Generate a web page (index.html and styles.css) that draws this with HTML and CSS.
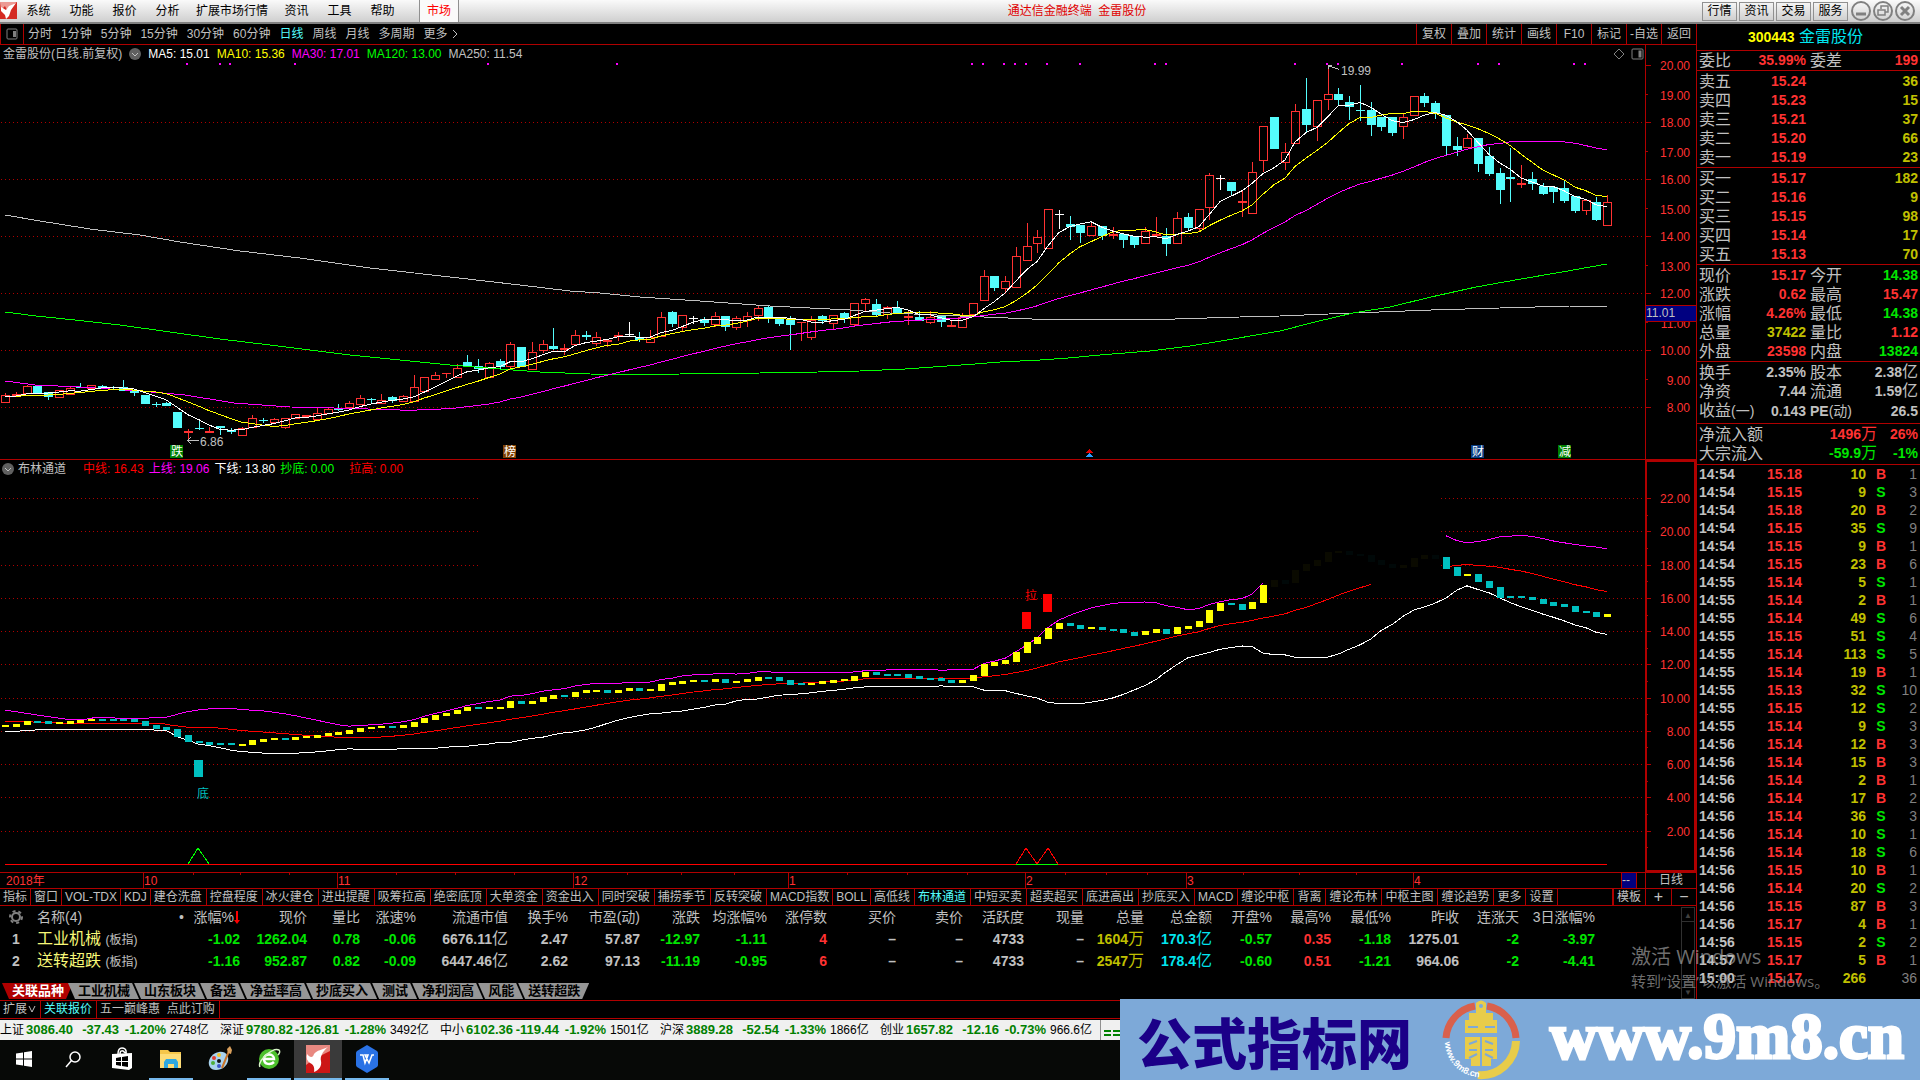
FILE: index.html
```html
<!DOCTYPE html>
<html lang="zh-CN">
<head>
    <meta charset="UTF-8">
    <title>通达信金融终端 金雷股份</title>
    <link rel="stylesheet" href="styles.css">
</head>
<body>
    <header class="titlebar">
        <svg class="app-logo" width="17" height="17" viewBox="0 0 17 17">
            <rect width="17" height="17" fill="#d42a22"/>
            <path d="M0 0h17L9 5 7 8 5 4 1 8z" fill="#ec9a94"/>
            <path d="M1 5l5 3 3-4 7-3-5 7-2 6-3 3-1-4-4-4z" fill="#fff"/>
        </svg>
        <nav class="menu">
            <a href="#">系统</a>
            <a href="#">功能</a>
            <a href="#">报价</a>
            <a href="#">分析</a>
            <a href="#">扩展市场行情</a>
            <a href="#">资讯</a>
            <a href="#">工具</a>
            <a href="#">帮助</a>
            <a href="#" class="market">市场</a>
        </nav>
        <div class="app-title">通达信金融终端&nbsp; 金雷股份</div>
        <div class="title-buttons">
            <button>行情</button>
            <button>资讯</button>
            <button>交易</button>
            <button>服务</button>
        </div>
        <div class="window-buttons">
            <button aria-label="最小化"><svg width="20" height="20" viewBox="0 0 20 20"><circle cx="10" cy="10" r="9"/><path d="M5 13h10" stroke-width="3"/></svg></button>
            <button aria-label="还原"><svg width="20" height="20" viewBox="0 0 20 20"><circle cx="10" cy="10" r="9"/><path d="M8 8V5h7v6h-3M5 9h7v5H5z" stroke-width="1.500"/></svg></button>
            <button aria-label="关闭"><svg width="20" height="20" viewBox="0 0 20 20"><circle cx="10" cy="10" r="9"/><path d="M6 6l8 8M14 6l-8 8" stroke-width="3"/></svg></button>
        </div>
    </header>

    <div class="workspace">
        <main class="left">
            <div class="toolbar">
                <button class="panel-toggle" aria-label="面板"><svg width="12" height="12" viewBox="0 0 12 12"><rect x="1" y="1" width="10" height="10" rx="1" fill="none" stroke="#808080"/><rect x="7" y="3" width="3" height="6" fill="#808080"/></svg></button>
                <nav class="periods">
                    <a href="#">分时</a>
                    <a href="#">1分钟</a>
                    <a href="#">5分钟</a>
                    <a href="#">15分钟</a>
                    <a href="#">30分钟</a>
                    <a href="#">60分钟</a>
                    <a href="#" class="active">日线</a>
                    <a href="#">周线</a>
                    <a href="#">月线</a>
                    <a href="#">多周期</a>
                    <a href="#">更多<svg width="8" height="10" viewBox="0 0 8 10"><path d="M3 1l4 4-4 4" fill="none" stroke="#c0c0c0"/></svg></a>
                </nav>
                <div class="tools">
                    <button>复权</button>
                    <button>叠加</button>
                    <button>统计</button>
                    <button>画线</button>
                    <button>F10</button>
                    <button>标记</button>
                    <button>-自选</button>
                    <button>返回</button>
                </div>
            </div>

            <section class="chart main-chart">
                <div class="plot">
                    <div class="legend">
                        <span>金雷股份(日线.前复权)</span>
                        <svg class="drop" width="12" height="12" viewBox="0 0 12 12"><circle cx="6" cy="6" r="6" fill="#606060"/><path d="M3 5l3 3 3-3" fill="none" stroke="#c0c0c0"/></svg>
                        <span class="white">MA5: 15.01</span>
                        <span class="yellow">MA10: 15.36</span>
                        <span class="magenta">MA30: 17.01</span>
                        <span class="lime">MA120: 13.00</span>
                        <span>MA250: 11.54</span>
                        <svg class="corner" width="32" height="14" viewBox="0 0 32 14" fill="none" stroke="#808080"><path d="M6 2l5 5-5 5-5-5z"/><rect x="19" y="2" width="11" height="10" rx="1"/><rect x="26" y="4" width="2" height="6" fill="#808080"/></svg>
                    </div>
                    <svg id="kline" class="canvas"></svg>
                </div>
                <svg id="priceAxis" class="axis"></svg>
            </section>

            <section class="chart sub-chart">
                <div class="plot">
                    <div class="legend sub-legend">
                        <svg class="drop" width="12" height="12" viewBox="0 0 12 12"><circle cx="6" cy="6" r="6" fill="#606060"/><path d="M3 5l3 3 3-3" fill="none" stroke="#c0c0c0"/></svg>
                        <span class="name">布林通道</span>
                        <span class="red">中线: 16.43</span>
                        <span class="magenta">上线: 19.06</span>
                        <span class="white">下线: 13.80</span>
                        <span class="lime low">抄底: 0.00</span>
                        <span class="red">拉高: 0.00</span>
                    </div>
                    <svg id="boll" class="canvas"></svg>
                </div>
                <svg id="bollAxis" class="axis framed"></svg>
            </section>

            <div class="timeline">
                <svg id="months" class="canvas"></svg>
                <div class="period-name">日线</div>
            </div>

            <nav class="indicators">
                <a href="#" class="short">指标</a>
                <a href="#" class="short">窗口</a>
                <a href="#" class="short">VOL-TDX</a>
                <a href="#" class="short">KDJ</a>
                <a href="#">建仓洗盘</a>
                <a href="#">控盘程度</a>
                <a href="#">冰火建仓</a>
                <a href="#">进出提醒</a>
                <a href="#">吸筹拉高</a>
                <a href="#">绝密底顶</a>
                <a href="#">大单资金</a>
                <a href="#">资金出入</a>
                <a href="#">同时突破</a>
                <a href="#">捕捞季节</a>
                <a href="#">反转突破</a>
                <a href="#" class="short">MACD指数</a>
                <a href="#" class="short">BOLL</a>
                <a href="#">高低线</a>
                <a href="#" class="active">布林通道</a>
                <a href="#">中短买卖</a>
                <a href="#">超卖超买</a>
                <a href="#">底进高出</a>
                <a href="#">抄底买入</a>
                <a href="#">MACD</a>
                <a href="#">缠论中枢</a>
                <a href="#">背离</a>
                <a href="#">缠论布林</a>
                <a href="#">中枢主图</a>
                <a href="#">缠论趋势</a>
                <a href="#">更多</a>
                <a href="#">设置</a>
                <a href="#" class="template">模板</a>
                <button aria-label="放大">+</button>
                <button aria-label="缩小">−</button>
            </nav>

            <div class="related">
                <table class="stocks" id="stocks">
                    <colgroup></colgroup>
                    <thead></thead>
                    <tbody></tbody>
                </table>
                <div class="scrollbar">
                    <button aria-label="向上">▲</button>
                    <button aria-label="向下">▼</button>
                </div>
            </div>

            <nav class="boards">
                <a href="#" class="active">关联品种</a>
                <a href="#">工业机械</a>
                <a href="#">山东板块</a>
                <a href="#">备选</a>
                <a href="#">净益率高</a>
                <a href="#">抄底买入</a>
                <a href="#">测试</a>
                <a href="#">净利润高</a>
                <a href="#">风能</a>
                <a href="#">送转超跌</a>
            </nav>

            <nav class="extras">
                <a href="#">扩展<svg width="8" height="8" viewBox="0 0 8 8"><path d="M1 1l3 6 3-6" fill="none" stroke="#c0c0c0"/></svg></a>
                <a href="#" class="active">关联报价</a>
                <a href="#">五一巅峰惠&nbsp; 点此订购</a>
            </nav>
        </main>

        <aside class="quote">
            <h1><span class="code">300443</span> 金雷股份</h1>
            <table class="fields">
                <tr><th>委比</th><td class="up">35.99%</td><th>委差</th><td class="up">199</td></tr>
            </table>
            <table class="fields">
                <tr><th>卖五</th><td class="up">15.24</td><th></th><td class="vol">36</td></tr>
                <tr><th>卖四</th><td class="up">15.23</td><th></th><td class="vol">15</td></tr>
                <tr><th>卖三</th><td class="up">15.21</td><th></th><td class="vol">37</td></tr>
                <tr><th>卖二</th><td class="up">15.20</td><th></th><td class="vol">66</td></tr>
                <tr><th>卖一</th><td class="up">15.19</td><th></th><td class="vol">23</td></tr>
            </table>
            <table class="fields">
                <tr><th>买一</th><td class="up">15.17</td><th></th><td class="vol">182</td></tr>
                <tr><th>买二</th><td class="up">15.16</td><th></th><td class="vol">9</td></tr>
                <tr><th>买三</th><td class="up">15.15</td><th></th><td class="vol">98</td></tr>
                <tr><th>买四</th><td class="up">15.14</td><th></th><td class="vol">17</td></tr>
                <tr><th>买五</th><td class="up">15.13</td><th></th><td class="vol">70</td></tr>
            </table>
            <table class="fields">
                <tr><th>现价</th><td class="up">15.17</td><th>今开</th><td class="down">14.38</td></tr>
                <tr><th>涨跌</th><td class="up">0.62</td><th>最高</th><td class="up">15.47</td></tr>
                <tr><th>涨幅</th><td class="up">4.26%</td><th>最低</th><td class="down">14.38</td></tr>
                <tr><th>总量</th><td class="vol">37422</td><th>量比</th><td class="up">1.12</td></tr>
                <tr><th>外盘</th><td class="up">23598</td><th>内盘</th><td class="down">13824</td></tr>
            </table>
            <table class="fields loose">
                <tr><th>换手</th><td>2.35%</td><th>股本</th><td>2.38<span class="unit">亿</span></td></tr>
                <tr><th>净资</th><td>7.44</th><th>流通</th><td>1.59<span class="unit">亿</span></td></tr>
                <tr><th>收益<small>(一)</small></th><td>0.143</td><th><b>PE</b><small>(动)</small></th><td>26.5</td></tr>
            </table>
            <table class="fields flow">
                <tr><th>净流入额</th><td class="up">1496<span class="unit">万</span></td><td class="up">26%</td></tr>
                <tr><th>大宗流入</th><td class="down">-59.9<span class="unit">万</span></td><td class="down">-1%</td></tr>
            </table>
            <table class="ticks" id="ticks"></table>
        </aside>
    </div>

    <footer>
        <div class="indexes">
            <div class="index"><span>上证</span><b>3086.40</b><b>-37.43</b><b>-1.20%</b><span>2748亿</span></div>
            <div class="index"><span>深证</span><b>9780.82</b><b>-126.81</b><b>-1.28%</b><span>3492亿</span></div>
            <div class="index"><span>中小</span><b>6102.36</b><b>-119.44</b><b>-1.92%</b><span>1501亿</span></div>
            <div class="index"><span>沪深</span><b>3889.28</b><b>-52.54</b><b>-1.33%</b><span>1866亿</span></div>
            <div class="index"><span>创业</span><b>1657.82</b><b>-12.16</b><b>-0.73%</b><span>966.6亿</span></div>
            <div class="signal"><i></i><i></i><i></i><i></i></div>
        </div>
        <div class="taskbar">
            <button aria-label="开始"><svg width="18" height="18" viewBox="0 0 18 18" fill="#fff"><path d="M1 3.500L8 2.500V8.500H1zM9 2.300L17 1V8.500H9zM1 9.500H8V15.500L1 14.500zM9 9.500H17V17L9 15.700z"/></svg></button>
            <button aria-label="搜索"><svg width="18" height="18" viewBox="0 0 18 18" fill="none" stroke="#fff" stroke-width="1.500"><circle cx="11" cy="7" r="5"/><path d="M7.500 10.500L2 17"/></svg></button>
            <button aria-label="应用商店"><svg width="22" height="24" viewBox="0 0 22 24"><path d="M7 7C7 1 10 1 11 1s5 0 4 6M9 7c0-4 3-4 5-1" fill="none" stroke="#fff" stroke-width="1.500"/><path d="M1 7l20-1v15l-3 2L1 21z" fill="#fff"/><path d="M5 11l5-1v4H5zM11 10l6-1v5h-6zM5 15h5v4l-5-1zM11 15h6v5l-6-1z" fill="#000"/></svg></button>
            <button class="open" aria-label="文件资源管理器"><svg width="24" height="20" viewBox="0 0 24 20"><path d="M1 1h8l2 2h11v16H1z" fill="#f5c64a"/><path d="M1 5h21v14H1z" fill="#fddc77"/><path d="M5 19v-6l2-3h10l2 3v6h-4v-4H9v4z" fill="#2fa8e0"/></svg></button>
            <button aria-label="画图"><svg width="26" height="26" viewBox="0 0 26 26"><path d="M12 6c7-1 10 4 9 9s-6 9-12 9-8-5-7-9 4-8 10-9z" fill="#a9d3ee"/><circle cx="7" cy="12" r="2" fill="#e23b2e"/><circle cx="12" cy="9" r="2" fill="#f3c52b"/><circle cx="6" cy="17" r="2" fill="#4caf3a"/><circle cx="12" cy="20" r="2" fill="#3b55c9"/><circle cx="12" cy="15" r="2" fill="#111"/><path d="M22 5l-7 17" stroke="#c8752b" stroke-width="2"/><path d="M21 7l-1-4 3-3 2 4-1 4z" fill="#d9a05c"/></svg></button>
            <button class="open" aria-label="浏览器"><svg width="24" height="24" viewBox="0 0 24 24"><circle cx="12" cy="12" r="10" fill="#4cc02c"/><path d="M7 12h10c0-6-10-6-10 0 0 6 7 6 10 3" fill="none" stroke="#fff" stroke-width="2.500"/><path d="M3 20C0 14 16 0 22 3c1 1 1 3-1 5" fill="none" stroke="#d8f5c8" stroke-width="1.500"/></svg></button>
            <button class="open current" aria-label="通达信"><svg width="24" height="28" viewBox="0 0 24 28"><rect width="24" height="28" fill="#cc1616"/><path d="M0 0h24v6L8 14 0 20z" fill="#e88880"/><path d="M1 9c3 4 6 4 7 0 3-4 8-4 14-7-6 5-8 10-7 14 1 5-2 9-7 11 1-5-1-8-4-9-3-2-4-5-3-9z" fill="#fff"/></svg></button>
            <button class="open" aria-label="WPS"><svg width="24" height="28" viewBox="0 0 24 28"><path d="M12 0l10 6q1 1 1 2v12q0 1-1 2l-10 6-10-6q-1-1-1-2V8q0-1 1-2z" fill="#2a72e5"/><path d="M5 10h3l2 8 3-8h-3l4 8 3-8h2M17 10l-3 8" fill="none" stroke="#fff" stroke-width="1.500"/></svg></button>
        </div>
        <div class="banner">
            <span class="site-name">公式指标网</span>
            <svg class="site-logo" width="80" height="80" viewBox="0 0 80 80" fill="none">
                <path d="M5 38A35 35 0 0 1 34 6M46 6A35 35 0 0 1 75 38" stroke="#d9604c" stroke-width="7"/>
                <path d="M75 41A35 35 0 0 1 37 75" stroke="#e8cc4a" stroke-width="8"/>
                <path d="M35 3q5-5 10 0v10h7v7h4v13H24V20h4v-7h7zM24 37h32v22h-6v7H30v-7h-6z" fill="#e8cc4a"/>
                <circle cx="40" cy="6" r="2" fill="#7da9d8"/>
                <path d="M27 27h10M44 27h10M40 37v29M28 44l8-3M52 44l-8-3M28 50h8M44 50h8M28 58l8-4M52 58l-8-4" stroke="#7da9d8" stroke-width="2"/>
                <defs><path id="ring" d="M4 42A36 36 0 0 0 36 77"/></defs>
                <text class="ring-text"><textPath href="#ring">www.9m8.cn</textPath></text>
            </svg>
            <span class="site-url">www.9m8.cn</span>
        </div>
    </footer>

    <div class="activate">
        <p class="big">激活 Windows</p>
        <p>转到“设置”以激活 Windows。</p>
    </div>

    <script src="script.js"></script>
</body>
</html>
```
FILE: styles.css
```css
* {
    box-sizing: border-box;
}
body {
    margin: 0;
    min-height: 100vh;
    display: flex;
    flex-direction: column;
    position: relative;
    overflow: hidden;
    background: #000;
    color: #c0c0c0;
    font-family: "Liberation Sans", "Noto Sans CJK SC", sans-serif;
    font-size: 12px;
    line-height: 16px;
}
a {
    color: inherit;
    text-decoration: none;
    white-space: nowrap;
}
button {
    padding: 0;
    border: none;
    background: none;
    color: inherit;
    font: inherit;
    white-space: nowrap;
}
svg {
    display: block;
    flex: none;
}
table {
    border-collapse: collapse;
    table-layout: fixed;
    width: 100%;
}
th, td {
    padding: 0;
    white-space: nowrap;
}

/* 标题栏 */
.titlebar {
    display: flex;
    align-items: center;
    height: 24px;
    border-bottom: 2px solid #808080;
    background: linear-gradient(#fafafa, #cfcfcf);
    color: #000;
}
.app-logo {
    align-self: flex-start;
    margin-top: 2px;
}
.menu {
    display: flex;
    height: 22px;
    line-height: 22px;
}
.menu a {
    min-width: 43px;
    padding: 0 7px;
    text-align: center;
}
.menu .market {
    min-width: 39px;
    margin-left: 15px;
    border: solid #909090;
    border-width: 0 1px;
    background: #fafafa;
    color: #f00;
}
.app-title {
    flex: 1;
    padding-right: 7px;
    text-align: center;
    color: #e00000;
}
.title-buttons {
    display: flex;
    gap: 2px;
}
.title-buttons button {
    width: 35px;
    height: 19px;
    border: 1px solid #909090;
    background: linear-gradient(#f4f4f4, #cfcfcf);
}
.window-buttons {
    display: flex;
    gap: 2px;
    padding: 0 5px 0 3px;
}
.window-buttons svg {
    fill: none;
    stroke: #808080;
    stroke-width: 2;
}

/* 主体 */
.workspace {
    flex: 1;
    display: grid;
    grid-template-columns: 1fr 224px;
}
.left {
    display: flex;
    flex-direction: column;
    min-width: 0;
}
.toolbar {
    display: flex;
    height: 21px;
    line-height: 20px;
    border-bottom: 1px solid #b00000;
}
.panel-toggle {
    width: 24px;
    padding-left: 5px;
    border: solid #b00000;
    border-width: 0 1px;
}
.periods {
    display: flex;
    flex: 1;
    gap: 9px;
    padding-left: 4px;
}
.periods svg {
    display: inline-block;
    vertical-align: -1px;
    margin-left: 2px;
}
.active {
    color: #54fcfc;
}
.tools {
    display: flex;
}
.tools button {
    width: 35px;
    border-left: 1px solid #b00000;
}

/* 图表 */
.chart {
    display: grid;
    grid-template-columns: 1fr 51px;
}
.main-chart {
    height: 415px;
    border-bottom: 1px solid #b00000;
}
.sub-chart {
    height: 412px;
}
.plot {
    display: flex;
    flex-direction: column;
    min-width: 0;
}
.legend {
    display: flex;
    align-items: center;
    gap: 7px;
    height: 17px;
    padding-left: 3px;
}
.corner {
    margin-left: auto;
}
.sub-legend {
    gap: 5px;
    padding-left: 2px;
}
.sub-legend .name {
    margin: 0 12px 0 -1px;
}
.sub-legend .low {
    margin-right: 10px;
}
.white { color: #fff; }
.yellow { color: #ff0; }
.magenta { color: #f0f; }
.lime { color: #0f0; }
.red { color: #f00; }
.canvas {
    flex: 1;
    width: 100%;
    shape-rendering: crispEdges;
}
.axis {
    width: 51px;
    height: 100%;
    border-left: 1px solid #b00000;
    shape-rendering: crispEdges;
}
.axis.framed {
    border: 2px solid #b00000;
}
.axis text {
    fill: #ff3232;
    text-anchor: end;
}
.axis .cursor {
    fill: #c0c0c0;
    text-anchor: start;
}
.grid {
    stroke: #b00000;
    stroke-dasharray: 1 3;
}
.line {
    fill: none;
}

.timeline {
    display: flex;
    height: 16px;
    border-top: 1px solid #b00000;
}
.timeline text {
    fill: #ff3232;
}
.timeline .canvas {
    width: auto;
    height: 15px;
    min-width: 0;
}
.period-name {
    width: 51px;
    border-left: 1px solid #b00000;
    text-align: center;
    line-height: 15px;
}
.indicators {
    display: flex;
    height: 18px;
    line-height: 16px;
    border: solid #b00000;
    border-width: 1px 0;
}
.indicators a {
    padding: 0 4px 0 3px;
    border-right: 1px solid #b00000;
}
.indicators .short {
    padding-right: 3px;
}
.indicators .template {
    margin-left: auto;
    border-left: 2px solid #b00000;
}
.indicators button {
    width: 25px;
    font-size: 16px;
}
.indicators button + button {
    border-left: 1px solid #b00000;
}

/* 关联品种列表 */
.related {
    flex: 1;
    display: flex;
}
.stocks {
    flex: 1;
    align-self: flex-start;
    font-size: 14px;
    text-align: right;
}
.stocks th {
    height: 22px;
    font-weight: normal;
}
.stocks td {
    height: 22px;
    font-weight: bold;
}
.stocks td:first-child,
.stocks th:first-child {
    text-align: center;
}
.stocks th:nth-child(2),
.stocks td:nth-child(2) {
    padding-left: 5px;
    text-align: left;
}
.stocks .stock {
    color: #f8f878;
    font-size: 16px;
    font-weight: normal;
}
.stocks small {
    color: #c0c0c0;
    font-size: 12px;
    font-weight: normal;
}
.stocks .dot {
    float: right;
    margin-right: 6px;
}
.stocks .gear {
    margin: 0 auto;
}
.stocks .sort {
    display: inline-block;
    vertical-align: -2px;
}
.unit {
    font-size: 16px;
    font-weight: normal;
}
.up, .stocks .up { color: #ff3232; }
.down, .stocks .down { color: #00e600; }
.vol, .stocks .vol { color: #c0c000; }
.amt, .stocks .amt { color: #00e6f0; }
.scrollbar {
    display: flex;
    flex-direction: column;
    justify-content: space-between;
    width: 14px;
    margin: 1px 1px -17px 0;
    border: 1px solid #303030;
    color: #404040;
    font-size: 8px;
}
.scrollbar button {
    height: 14px;
    border-bottom: 1px solid #303030;
}

.boards {
    display: flex;
    height: 17px;
    padding-left: 2px;
    line-height: 16px;
}
.boards a {
    height: 16px;
    margin-right: -5px;
    padding: 0 9px 0 10px;
    background: #969696;
    color: #000;
    font-size: 13px;
    font-weight: bold;
    clip-path: polygon(0 0, calc(100% - 7px) 0, 100% 100%, 7px 100%);
}
.boards .active {
    background: #b00000;
    color: #fff;
    clip-path: polygon(0 0, 100% 0, calc(100% - 7px) 100%, 7px 100%);
}
.boards a:last-child {
    clip-path: polygon(0 0, 100% 0, calc(100% - 7px) 100%, 7px 100%);
}
.extras {
    display: flex;
    height: 19px;
    line-height: 17px;
    border: solid #b00000;
    border-width: 1px 0;
}
.extras a {
    padding: 0 4px 0 3px;
    border-right: 1px solid #b00000;
}
.extras svg {
    display: inline-block;
    margin-left: 1px;
}

/* 右侧报价 */
.quote {
    border-left: 1px solid #b00000;
    line-height: 19px;
}
.quote h1 {
    height: 26px;
    margin: 0;
    padding-right: 6px;
    line-height: 26px;
    text-align: center;
    color: #00e6f0;
    font-size: 16px;
    font-weight: normal;
}
.quote .code {
    color: #ff0;
    font-size: 14px;
    font-weight: bold;
}
.fields {
    border-top: 1px solid #b00000;
    border-collapse: separate;
    border-spacing: 0;
    padding: 1px 2px 0;
}
.fields:first-of-type {
    padding-top: 0;
}
.fields.loose {
    padding-bottom: 2px;
}
.fields.flow {
    padding-bottom: 1px;
}
.fields th {
    height: 19px;
    font-size: 16px;
    font-weight: normal;
    text-align: left;
    line-height: 19px;
}
.fields td {
    height: 19px;
    font-size: 14px;
    font-weight: bold;
    text-align: right;
    line-height: 19px;
}
.fields th:first-child {
    width: 52px;
}
.fields th + td {
    width: 55px;
}
.fields th + td + th {
    width: 46px;
    padding-left: 4px;
}
.fields b {
    font-size: 14px;
}
.fields small {
    font-size: 14px;
}
.fields.flow th {
    width: 70px;
}
.fields.flow th + td {
    width: 108px;
}
.fields td:last-child {
    width: auto;
}
.unit {
    line-height: 16px;
}
.ticks {
    border-top: 1px solid #b00000;
    font-size: 14px;
    font-weight: bold;
}
.ticks td {
    height: 18px;
    line-height: 18px;
    text-align: right;
}
.ticks td:nth-child(1) {
    width: 42px;
    padding-left: 2px;
    text-align: left;
}
.ticks td:nth-child(2) {
    width: 63px;
}
.ticks td:nth-child(3) {
    width: 64px;
}
.ticks td:nth-child(4) {
    width: 30px;
    text-align: center;
}
.ticks td:nth-child(5) {
    padding-right: 3px;
    color: #808080;
    font-weight: normal;
}

/* 底部 */
footer {
    position: relative;
}
.indexes {
    display: flex;
    height: 21px;
    border-top: 1px solid #000;
    background: #f0f0f0;
    color: #000;
    line-height: 20px;
}
.index {
    display: grid;
    grid-template-columns: 26px 47px 46px 47px 1fr;
    width: 220px;
}
.index b {
    color: #008000;
    font-size: 13px;
    text-align: right;
}
.index span:last-child {
    padding-left: 4px;
}
.signal {
    display: grid;
    grid-template-columns: 7px 7px;
    gap: 2px;
    align-content: end;
    padding: 4px 3px;
    border-left: 1px solid #909090;
}
.signal i {
    height: 2px;
    background: #008000;
}
.taskbar {
    display: flex;
    gap: 1px;
    height: 40px;
    background: #070907;
}
.taskbar button {
    display: flex;
    align-items: center;
    justify-content: center;
    width: 48px;
    border-bottom: 2px solid transparent;
}
.taskbar .open {
    border-image: linear-gradient(90deg, transparent 4px, #76b9ed 4px, #76b9ed 44px, transparent 44px) 2;
    border-width: 0 0 2px;
}
.taskbar .current {
    border-image: none;
    border-bottom-color: #76b9ed;
    background: #3a3a3a;
}
.banner {
    position: absolute;
    right: 0;
    bottom: 0;
    display: flex;
    align-items: center;
    width: 800px;
    height: 81px;
    padding: 0 16px 0 17px;
    background: #7da9d8;
    white-space: nowrap;
}
.site-name {
    color: #1b0088;
    font-family: "Noto Sans CJK SC", sans-serif;
    font-size: 55px;
    font-weight: 900;
    line-height: 80px;
}
.site-logo {
    margin-left: 29px;
}
.ring-text {
    fill: #fff;
    font-size: 9px;
    font-weight: bold;
}
.site-url {
    margin-left: auto;
    color: #fff;
    font-family: "Liberation Serif", serif;
    font-size: 65px;
    font-weight: bold;
    line-height: 80px;
    padding-bottom: 8px;
    -webkit-text-stroke: 3px #fff;
}

.activate {
    position: absolute;
    right: 92px;
    bottom: 88px;
    width: 197px;
    color: rgba(160, 160, 160, 0.7);
    font-family: "Open Sans", "Noto Sans CJK SC", sans-serif;
    font-size: 15px;
    line-height: 22px;
    white-space: nowrap;
    pointer-events: none;
}
.activate p {
    margin: 0;
}
.activate .big {
    font-size: 20px;
    line-height: 26px;
}
```
FILE: script.js
```js
const NS = 'http://www.w3.org/2000/svg';

function add(parent, tag, attrs, text) {
    const el = document.createElementNS(NS, tag);
    for (const k in attrs) el.setAttribute(k, attrs[k]);
    if (text !== undefined) el.textContent = text;
    parent.appendChild(el);
    return el;
}

// 最高 / 实体上 / 实体下 / 最低，r 阳线 c 阴线 w 平盘
const bars = `r393,395,402,402 r392,394,396,396 r385,386,393,394 c386,386,393,393 c392,392,397,400
r390,390,397,397 r386,388,394,394 c383,387,388,388 r385,385,388,389 c385,386,388,388
c386,387,388,390 c380,387,391,391 c391,391,393,396 c395,395,404,404 c402,404,405,407
c402,403,406,406 c412,412,428,428 r429,431,433,439 c420,428,429,430 r427,431,433,433
c426,426,428,435 c428,430,432,434 r427,428,435,435 r415,418,427,427 c418,420,421,423
r418,419,422,422 r418,418,427,429 r414,414,418,418 r415,415,417,418 r407,413,419,419
r408,409,413,413 c404,408,410,411 r401,403,407,407 r395,398,404,404 c398,399,400,403
r394,400,403,403 c396,397,401,403 r395,396,401,401 r375,387,401,401 r377,377,391,391
r372,375,379,379 r373,373,374,378 r364,368,377,377 c355,362,366,367 c359,366,369,373
r362,363,377,377 c359,361,367,370 r342,344,366,369 c347,347,367,367 r342,352,369,370
r340,344,350,353 c328,346,349,350 r344,348,350,355 r330,335,344,344 c331,335,337,340
r332,337,343,346 r339,340,342,347 r332,335,337,341 w322,334,335,337 c332,337,340,342
r330,337,342,342 r312,317,336,336 c311,312,324,327 r315,315,327,332 w316,318,319,324
c317,319,323,326 r312,316,324,327 c316,316,327,331 r316,318,327,330 r312,316,320,327
r306,308,315,321 c306,307,319,323 c317,317,324,326 c316,320,325,350 r322,322,323,341
r316,320,337,340 c315,316,321,324 r315,315,323,329 c312,313,319,323 r303,303,324,326
r298,299,303,311 c299,304,315,317 r306,307,314,319 c301,308,313,313 r311,316,318,325
c311,317,321,321 r311,317,322,324 c315,315,322,327 r320,325,327,327 r313,317,327,327
r303,303,314,314 r270,276,300,300 c276,276,288,291 r276,281,288,293 r247,256,287,287
r223,246,260,260 r230,237,243,253 r209,209,248,249 w210,214,215,229 c216,224,227,240
c225,225,233,243 r223,226,235,235 c226,226,236,240 r227,234,236,239 c234,234,240,248
c236,236,245,248 r227,231,243,243 r217,234,236,236 c228,236,244,256 r212,218,243,243
c213,217,228,231 r209,209,228,232 r173,175,207,220 w175,178,179,190 c182,182,191,196
r190,201,203,217 r162,172,213,213 r126,126,160,172 c117,117,149,149 r143,152,162,170
r104,111,143,143 c78,109,125,133 r100,100,126,141 r65,94,99,110 c88,94,100,105
c96,102,107,120 c85,110,111,121 c102,110,125,136 c117,117,127,131 c117,117,133,136
r113,117,126,139 r96,96,115,115 c93,96,103,107 c101,103,114,119 c115,115,146,155
c137,146,150,156 r134,138,147,147 c138,138,164,172 c147,156,174,176 c168,173,190,204
c148,177,179,202 r165,183,185,188 c172,179,184,190 c183,186,194,195 c187,187,192,203
c181,188,201,203 c196,196,211,213 r200,200,210,215 c197,202,220,221 r195,202,225,225`
    .split(/\s+/).map(s => {
        const [high, top, bottom, low] = s.slice(1).split(',').map(Number);
        return { kind: s[0], high, top, bottom, low, close: s[0] === 'c' ? bottom : top };
    });

const barX = i => Math.round(5 + i * 10.753);
const closes = bars.map(b => b.close);

function average(n, end) {
    let sum = 0;
    for (let i = end - n + 1; i <= end; i++) sum += i < 0 ? 397 : closes[i];
    return sum / n;
}

function line(parent, points, color) {
    add(parent, 'polyline', { class: 'line', stroke: color, points: points.map(p => p.join()).join(' ') });
}

// K线主图
const kline = add(document.getElementById('kline'), 'g', { transform: 'translate(0 -62)' });
[122, 179, 236, 293, 350, 407].forEach(y => {
    add(kline, 'line', { class: 'grid', x1: 1, x2: '100%', y1: y + 0.5, y2: y + 0.5 });
});

const colors = { r: '#ff3232', c: '#54fcfc', w: '#fff' };
bars.forEach((b, i) => {
    const x = barX(i), fill = colors[b.kind];
    if (b.top > b.high) add(kline, 'rect', { x, y: b.high, width: 1, height: b.top - b.high, fill });
    if (b.low > b.bottom) add(kline, 'rect', { x, y: b.bottom, width: 1, height: b.low - b.bottom, fill });
    if (b.kind === 'r' && b.bottom - b.top > 2) {
        add(kline, 'rect', { x: x - 3.5, y: b.top + 0.5, width: 8, height: b.bottom - b.top, fill: 'none', stroke: fill });
    } else {
        add(kline, 'rect', { x: x - 4, y: b.top, width: 9, height: b.bottom - b.top, fill });
    }
});

line(kline, [[5, 215], [40, 221], [90, 229], [140, 235], [180, 242], [240, 251], [300, 258], [370, 268], [450, 277], [520, 285], [570, 291], [600, 293], [640, 297], [700, 301], [770, 306], [850, 310], [890, 313], [960, 316], [1032, 319], [1175, 319], [1240, 317], [1280, 316], [1353, 313], [1431, 310], [1500, 308], [1570, 306], [1607, 306]], '#c0c0c0');
line(kline, [[5, 312], [36, 316], [75, 320], [120, 325], [170, 332], [220, 339], [270, 345], [310, 350], [350, 355], [400, 360], [450, 365], [500, 369], [540, 372], [590, 374], [640, 375], [680, 374], [760, 373], [818, 372], [860, 371], [905, 369], [975, 364], [1000, 362], [1040, 360], [1068, 358], [1100, 355], [1150, 351], [1190, 346], [1215, 342], [1280, 331], [1315, 322], [1353, 313], [1390, 307], [1431, 297], [1476, 287], [1521, 279], [1562, 272], [1607, 264]], '#00ff00');
const ma = (n, from) => bars.map((b, i) => [barX(i), average(n, i)]).slice(from);
line(kline, [[5, 381], [35, 385], [80, 387], [140, 391], [185, 395], [234, 403], [290, 407]].concat(ma(30, 29)), '#ff00ff');
line(kline, ma(10, 0), '#ffff00');
line(kline, ma(5, 0), '#ffffff');

[187, 220, 230, 295, 488, 617, 972, 983, 1004, 1015, 1026, 1047, 1080, 1155, 1166, 1295, 1327, 1338, 1402, 1478, 1499, 1574, 1585].forEach(x => {
    add(kline, 'rect', { x: x - 1, y: 63, width: 2, height: 2, fill: '#ff00ff' });
});

// 高低点标注
add(kline, 'path', { d: 'M1339 69.5L1328 65.500M1328 69V65.500h4', fill: 'none', stroke: '#c0c0c0' });
add(kline, 'text', { x: 1341, y: 75, fill: '#c0c0c0' }, '19.99');
add(kline, 'path', { d: 'M199 440.500H188M191 437l-3 3.500 3 3.500', fill: 'none', stroke: '#c0c0c0' });
add(kline, 'text', { x: 200, y: 446, fill: '#c0c0c0' }, '6.86');
[[170, '跌', '#008000'], [503, '榜', '#804000'], [1471, '财', '#0a3c82'], [1558, '减', '#008000']].forEach(([x, t, fill]) => {
    add(kline, 'rect', { x, y: 445, width: 13, height: 13, fill });
    add(kline, 'text', { x: x + 1, y: 456, fill: '#fff' }, t);
});
add(kline, 'path', { d: 'M1089 449l4 4h-8z', fill: '#e00000' });
add(kline, 'path', { d: 'M1089 453l4 4h-8z', fill: '#2a9cff' });

// 价格轴
const priceAxis = add(document.getElementById('priceAxis'), 'g', { transform: 'translate(0 -45)' });
for (let p = 20; p >= 8; p--) {
    const y = Math.round(65 + (20 - p) * 28.5);
    const even = p % 2 === 0;
    add(priceAxis, 'rect', { x: 0, y, width: even ? 5 : 2, height: 1, fill: '#b00000' });
    add(priceAxis, 'text', { x: 44, y: y + (even ? 5 : 6) }, p.toFixed(2));
}
add(priceAxis, 'rect', { x: 0, y: 305, width: 51, height: 16, fill: '#000080' });
add(priceAxis, 'path', { d: 'M0 305.500h51M0 321.500h51', stroke: '#b00000' });
add(priceAxis, 'text', { class: 'cursor', x: 0, y: 317 }, '11.01');

// 布林通道副图
const boll = add(document.getElementById('boll'), 'g', { transform: 'translate(0 -477)' });
const subY = v => 864.3 - v * 16.62;
const toPrice = y => 20 - (y - 65.5) / 28.5;
for (let v = 2; v <= 22; v += 2) {
    const y = Math.floor(subY(v)) + 0.5;
    if (v >= 18) {
        add(boll, 'line', { class: 'grid', x1: 1, x2: 478, y1: y, y2: y });
        add(boll, 'line', { class: 'grid', x1: 1441, x2: '100%', y1: y, y2: y });
    } else {
        add(boll, 'line', { class: 'grid', x1: 1, x2: '100%', y1: y, y2: y });
    }
}

const upper = [[5, 710], [37, 715], [65, 719], [87, 719], [98, 717], [131, 719], [167, 717], [186, 712], [198, 710]];
const middle = [[5, 721], [60, 723], [160, 723], [170, 725], [186, 727], [198, 728]];
const lower = [[5, 732], [35, 730], [50, 729], [140, 729], [167, 731], [178, 737], [190, 741], [198, 744]];
const upperEnd = [], middleEnd = [];
for (let i = 19; i < bars.length; i++) {
    const set = closes.slice(i - 19, i + 1).map(toPrice);
    const mid = set.reduce((a, b) => a + b) / 20;
    const sd = Math.sqrt(set.reduce((a, b) => a + (b - mid) ** 2, 0) / 20);
    const x = barX(i);
    if (i < 118) upper.push([x, subY(mid + 2 * sd)]);
    if (i < 128) middle.push([x, subY(mid)]);
    lower.push([x, subY(mid - 2 * sd)]);
    if (i > 133) {
        upperEnd.push([x, subY(mid + 2 * sd)]);
        middleEnd.push([x, subY(mid)]);
    }
}
line(boll, upper, '#ff00ff');
line(boll, upperEnd, '#ff00ff');
line(boll, middle, '#ff0000');
line(boll, middleEnd, '#ff0000');
line(boll, lower, '#ffffff');

let prev = 8.3;
bars.forEach((b, i) => {
    const typical = (toPrice(b.high) + toPrice(b.low) + 2 * toPrice(b.close)) / 4;
    const now = prev + (typical - prev) * 0.58;
    const y = Math.floor(subY(Math.max(now, prev)));
    const h = Math.max(1, Math.ceil(Math.abs(subY(now) - subY(prev))) + 1);
    add(boll, 'rect', {
        x: barX(i) - 3, y, width: 7, height: h,
        fill: now >= prev ? '#ffff00' : '#00c0c0',
        opacity: i > 117 && i < 134 ? 0.04 : 1
    });
    prev = now;
});

add(boll, 'rect', { x: 194, y: 760, width: 9, height: 17, fill: '#00c0c0' });
add(boll, 'text', { x: 197, y: 798, fill: '#00c0c0' }, '底');
add(boll, 'rect', { x: 1022, y: 612, width: 9, height: 17, fill: '#ff0000' });
add(boll, 'rect', { x: 1043, y: 594, width: 9, height: 18, fill: '#ff0000' });
add(boll, 'text', { x: 1025, y: 600, fill: '#ff0000' }, '拉');
add(boll, 'path', { d: 'M5 864.500H1607', stroke: '#ff0000' });
add(boll, 'path', { d: 'M188 864l10-16 11 16', fill: 'none', stroke: '#00ff00' });
add(boll, 'path', { d: 'M1016 864l10-16 11 16 11-16 10 16', fill: 'none', stroke: '#ff0000' });
add(boll, 'path', { d: 'M1016 864.500h42', stroke: '#00ff00' });

const bollAxis = add(document.getElementById('bollAxis'), 'g', { transform: 'translate(-1 -462)' });
for (let v = 22; v >= 1; v--) {
    const y = Math.floor(subY(v));
    add(bollAxis, 'rect', { x: 0, y, width: v % 2 ? 2 : 5, height: 1, fill: '#b00000' });
    if (v % 2 === 0) add(bollAxis, 'text', { x: 44, y: y + 5 }, v.toFixed(2));
}

// 时间轴
const months = document.getElementById('months');
add(months, 'text', { x: 6, y: 12 }, '2018年');
[[143, '10'], [337, '11'], [573, '12'], [788, '1'], [1025, '2'], [1186, '3'], [1413, '4']].forEach(([x, t]) => {
    add(months, 'rect', { x, y: 0, width: 1, height: 15, fill: '#b00000' });
    add(months, 'text', { x: x + 1, y: 12 }, t);
});
[193, 240, 289, 396, 455, 514, 627, 681, 734, 847, 907, 967, 1065, 1106, 1147, 1243, 1299, 1356].forEach(x => {
    add(months, 'rect', { x, y: 0, width: 1, height: 2, fill: '#b00000' });
});
add(months, 'rect', { x: 1621, y: 0, width: 16, height: 15, fill: '#000080' });
add(months, 'path', { d: 'M1621.500 0v15M1636.500 0v15', stroke: '#b00000' });
const dash = add(months, 'text', { x: 1622, y: 11 }, '--');
dash.style.fill = '#c0c0c0';

// 关联品种
const gear = '<svg class="gear" width="14" height="14" viewBox="0 0 14 14"><circle cx="7" cy="7" r="4" fill="none" stroke="#808080" stroke-width="2"/><circle cx="7" cy="7" r="6" fill="none" stroke="#808080" stroke-width="2" stroke-dasharray="3 3"/></svg>';
const arrow = '<svg class="sort" width="6" height="13" viewBox="0 0 6 13"><path d="M2 0h2v9h2l-3 4-3-4h2z" fill="#f00"/></svg>';
const columns = [
    [gear, 32, '', '1', '2'],
    ['名称(4)<span class="dot">•</span>', 158, 'stock', '工业机械 <small>(板指)</small>', '送转超跌 <small>(板指)</small>'],
    ['涨幅%' + arrow, 50, 'down', '-1.02', '-1.16'],
    ['现价', 67, 'down', '1262.04', '952.87'],
    ['量比', 53, 'down', '0.78', '0.82'],
    ['涨速%', 56, 'down', '-0.06', '-0.09'],
    ['流通市值', 92, '', '6676.11亿', '6447.46亿'],
    ['换手%', 60, '', '2.47', '2.62'],
    ['市盈(动)', 72, '', '57.87', '97.13'],
    ['涨跌', 60, 'down', '-12.97', '-11.19'],
    ['均涨幅%', 67, 'down', '-1.11', '-0.95'],
    ['涨停数', 60, 'up', '4', '6'],
    ['买价', 69, '', '–', '–'],
    ['卖价', 67, '', '–', '–'],
    ['活跃度', 61, '', '4733', '4733'],
    ['现量', 60, '', '–', '–'],
    ['总量', 60, 'vol', '1604万', '2547万'],
    ['总金额', 68, 'amt', '170.3亿', '178.4亿'],
    ['开盘%', 60, 'down', '-0.57', '-0.60'],
    ['最高%', 59, 'up', '0.35', '0.51'],
    ['最低%', 60, 'down', '-1.18', '-1.21'],
    ['昨收', 68, '', '1275.01', '964.06'],
    ['连涨天', 60, 'down', '-2', '-2'],
    ['3日涨幅%', 76, 'down', '-3.97', '-4.41']
];
const unit = s => s.replace(/[亿万]$/, '<span class="unit">$&</span>');
const table = document.getElementById('stocks');
table.querySelector('colgroup').innerHTML = columns.map(c => `<col style="width: ${c[1]}px">`).join('') + '<col>';
table.querySelector('thead').innerHTML = '<tr>' + columns.map(c => `<th>${c[0]}</th>`).join('') + '<th></th></tr>';
table.querySelector('tbody').innerHTML = [3, 4].map(n =>
    '<tr>' + columns.map(c => `<td class="${c[2]}">${unit(c[n])}</td>`).join('') + '<td></td></tr>'
).join('');

// 分笔成交
const ticks = `14:54 15.18 10 B 1|14:54 15.15 9 S 3|14:54 15.18 20 B 2|14:54 15.15 35 S 9|14:54 15.15 9 B 1|14:54 15.15 23 B 6
14:55 15.14 5 S 1|14:55 15.14 2 B 1|14:55 15.14 49 S 6|14:55 15.15 51 S 4|14:55 15.14 113 S 5|14:55 15.14 19 B 1
14:55 15.13 32 S 10|14:55 15.15 12 S 2|14:55 15.14 9 S 3|14:56 15.14 12 B 3|14:56 15.14 15 B 3|14:56 15.14 2 B 1
14:56 15.14 17 B 2|14:56 15.14 36 S 3|14:56 15.14 10 S 1|14:56 15.14 18 S 6|14:56 15.15 10 B 1|14:56 15.14 20 S 2
14:56 15.15 87 B 3|14:56 15.17 4 B 1|14:56 15.15 2 S 2|14:57 15.17 5 B 1|15:00 15.17 266 - 36`;
document.getElementById('ticks').innerHTML = ticks.split(/[|\n]/).map(row => {
    const [time, price, vol, side, count] = row.split(' ');
    return `<tr><td>${time}</td><td class="up">${price}</td><td class="vol">${vol}</td>` +
        `<td class="${side === 'B' ? 'up' : 'down'}">${side === '-' ? '' : side}</td><td>${count}</td></tr>`;
}).join('');
```
